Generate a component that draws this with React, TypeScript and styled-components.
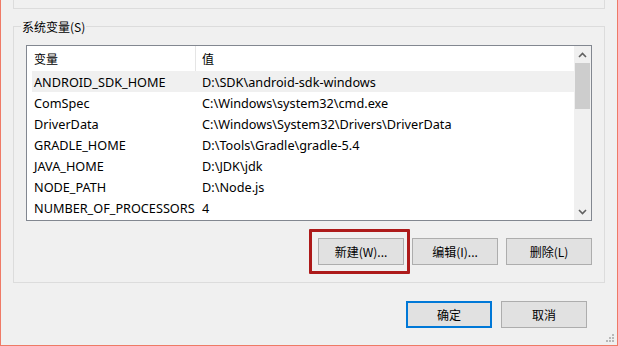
import styled, {createGlobalStyle} from 'styled-components'

const GlobalStyle = createGlobalStyle`
  html, body {
    margin: 0;
    padding: 0;
    background: #f0f0f0;
  }
  body {
    font-family: 'Noto Sans', 'Noto Sans CJK SC', sans-serif;
    font-size: 12px;
    color: #000;
  }
`

const Window = styled.div`
  position: relative;
  box-sizing: border-box;
  width: 618px;
  height: 346px;
  background: #f0f0f0;
  border-left: 1px solid #ef7a66;
  border-right: 1px solid #ef7a66;
  border-bottom: 1px solid #ef7a66;
  padding: 0 12px 0 12px;
  overflow: hidden;
`

const UpperGroupTail = styled.div`
  box-sizing: border-box;
  height: 9px;
  border-left: 1px solid #dcdcdc;
  border-right: 1px solid #dcdcdc;
  border-bottom: 1px solid #dcdcdc;
`

const Group = styled.div`
  box-sizing: border-box;
  margin-top: 17px;
  height: 257px;
  border: 1px solid #dcdcdc;
  padding: 0 12px 16px 12px;
  display: flex;
  flex-direction: column;
`

const Legend = styled.div`
  align-self: flex-start;
  margin: -9px 0 0 -5px;
  padding: 0 1px;
  height: 17px;
  line-height: 17px;
  background: #f0f0f0;
  font-family: 'Noto Sans CJK SC', sans-serif;
`

const ListBox = styled.div`
  box-sizing: border-box;
  margin-top: 10px;
  height: 176px;
  border: 1px solid #828790;
  background: #fff;
  display: flex;
`

const ListBody = styled.div`
  flex: 1;
  display: flex;
  flex-direction: column;
`

const HeaderRow = styled.div`
  display: flex;
  height: 25px;
  align-items: center;
  font-family: 'Noto Sans CJK SC', sans-serif;
`

const HeaderCell = styled.div<{$width?: number}>`
  box-sizing: border-box;
  height: 100%;
  display: flex;
  align-items: center;
  padding-left: ${(p) => (p.$width ? 7 : 6)}px;
  ${(p) => (p.$width ? `width: ${p.$width}px; border-right: 1px solid #e5e5e5;` : 'flex: 1;')}
`

const Row = styled.div<{$selected?: boolean}>`
  display: flex;
  align-items: center;
  height: 21px;
  margin-left: 5px;
  font-size: 12.7px;
  background: ${(p) => (p.$selected ? '#f0f0f0' : 'transparent')};
  white-space: nowrap;
`

const NameCell = styled.div`
  width: 163px;
  padding-left: 2px;
  box-sizing: border-box;
  overflow: hidden;
`

const ValueCell = styled.div`
  padding-left: 7px;
`

const ScrollBar = styled.div`
  width: 17px;
  background: #f0f0f0;
  display: flex;
  flex-direction: column;
`

const ScrollArrow = styled.div`
  height: 17px;
  display: flex;
  align-items: center;
  justify-content: center;
`

const ScrollThumb = styled.div`
  margin: 0 1px;
  height: 46px;
  background: #cdcdcd;
`

const ScrollTrack = styled.div`
  flex: 1;
`

const ButtonRow = styled.div<{$gap: number}>`
  display: flex;
  justify-content: flex-end;
  gap: ${(p) => p.$gap}px;
`

const Button = styled.button<{$default?: boolean}>`
  box-sizing: border-box;
  width: 86px;
  height: 27px;
  margin: 0;
  padding: 0;
  font-family: 'Noto Sans CJK SC', sans-serif;
  font-size: 12px;
  color: #000;
  background: #e1e1e1;
  border: ${(p) => (p.$default ? '2px solid #0078d7' : '1px solid #adadad')};
`

const Marked = styled.div`
  position: relative;

  &::after {
    content: '';
    position: absolute;
    left: -9px;
    top: -9px;
    right: -6px;
    bottom: -9px;
    border: 3px solid #ad1a1a;
    border-radius: 1px;
  }
`

const Footer = styled.div`
  margin-top: 18px;
  padding-right: 18px;
`

const Grip = styled.svg`
  position: absolute;
  right: 2px;
  bottom: 2px;
`

const vars = [
  {name: 'ANDROID_SDK_HOME', value: 'D:\\SDK\\android-sdk-windows'},
  {name: 'ComSpec', value: 'C:\\Windows\\system32\\cmd.exe'},
  {name: 'DriverData', value: 'C:\\Windows\\System32\\Drivers\\DriverData'},
  {name: 'GRADLE_HOME', value: 'D:\\Tools\\Gradle\\gradle-5.4'},
  {name: 'JAVA_HOME', value: 'D:\\JDK\\jdk'},
  {name: 'NODE_PATH', value: 'D:\\Node.js'},
  {name: 'NUMBER_OF_PROCESSORS', value: '4'},
]

const Chevron = ({up}: {up?: boolean}) => (
  <svg width="9" height="6" viewBox="0 0 9 6">
    <path
      d={up ? 'M1 5 L4.5 1.5 L8 5' : 'M1 1 L4.5 4.5 L8 1'}
      fill="none"
      stroke="#606060"
      strokeWidth="1.6"
    />
  </svg>
)

const App = () => {
  return (
    <Window>
      <GlobalStyle />
      <UpperGroupTail />
      <Group>
        <Legend>系统变量(S)</Legend>
        <ListBox>
          <ListBody>
            <HeaderRow>
              <HeaderCell $width={169}>变量</HeaderCell>
              <HeaderCell>值</HeaderCell>
            </HeaderRow>
            {vars.map((v, index) => (
              <Row key={index} $selected={index === 0}>
                <NameCell>{v.name}</NameCell>
                <ValueCell>{v.value}</ValueCell>
              </Row>
            ))}
          </ListBody>
          <ScrollBar>
            <ScrollArrow>
              <Chevron up />
            </ScrollArrow>
            <ScrollThumb />
            <ScrollTrack />
            <ScrollArrow>
              <Chevron />
            </ScrollArrow>
          </ScrollBar>
        </ListBox>
        <ButtonRow $gap={8} style={{marginTop: 17}}>
          <Marked>
            <Button>新建(W)...</Button>
          </Marked>
          <Button>编辑(I)...</Button>
          <Button>删除(L)</Button>
        </ButtonRow>
      </Group>
      <Footer>
        <ButtonRow $gap={9}>
          <Button $default>确定</Button>
          <Button>取消</Button>
        </ButtonRow>
      </Footer>
      <Grip width="10" height="10" viewBox="0 0 10 10">
        {[
          [6, 0],
          [3, 3],
          [6, 3],
          [0, 6],
          [3, 6],
          [6, 6],
        ].map(([x, y], i) => (
          <rect key={i} x={x + 1} y={y + 1} width="2" height="2" fill="#b8b8b8" />
        ))}
      </Grip>
    </Window>
  )
}

export default App
